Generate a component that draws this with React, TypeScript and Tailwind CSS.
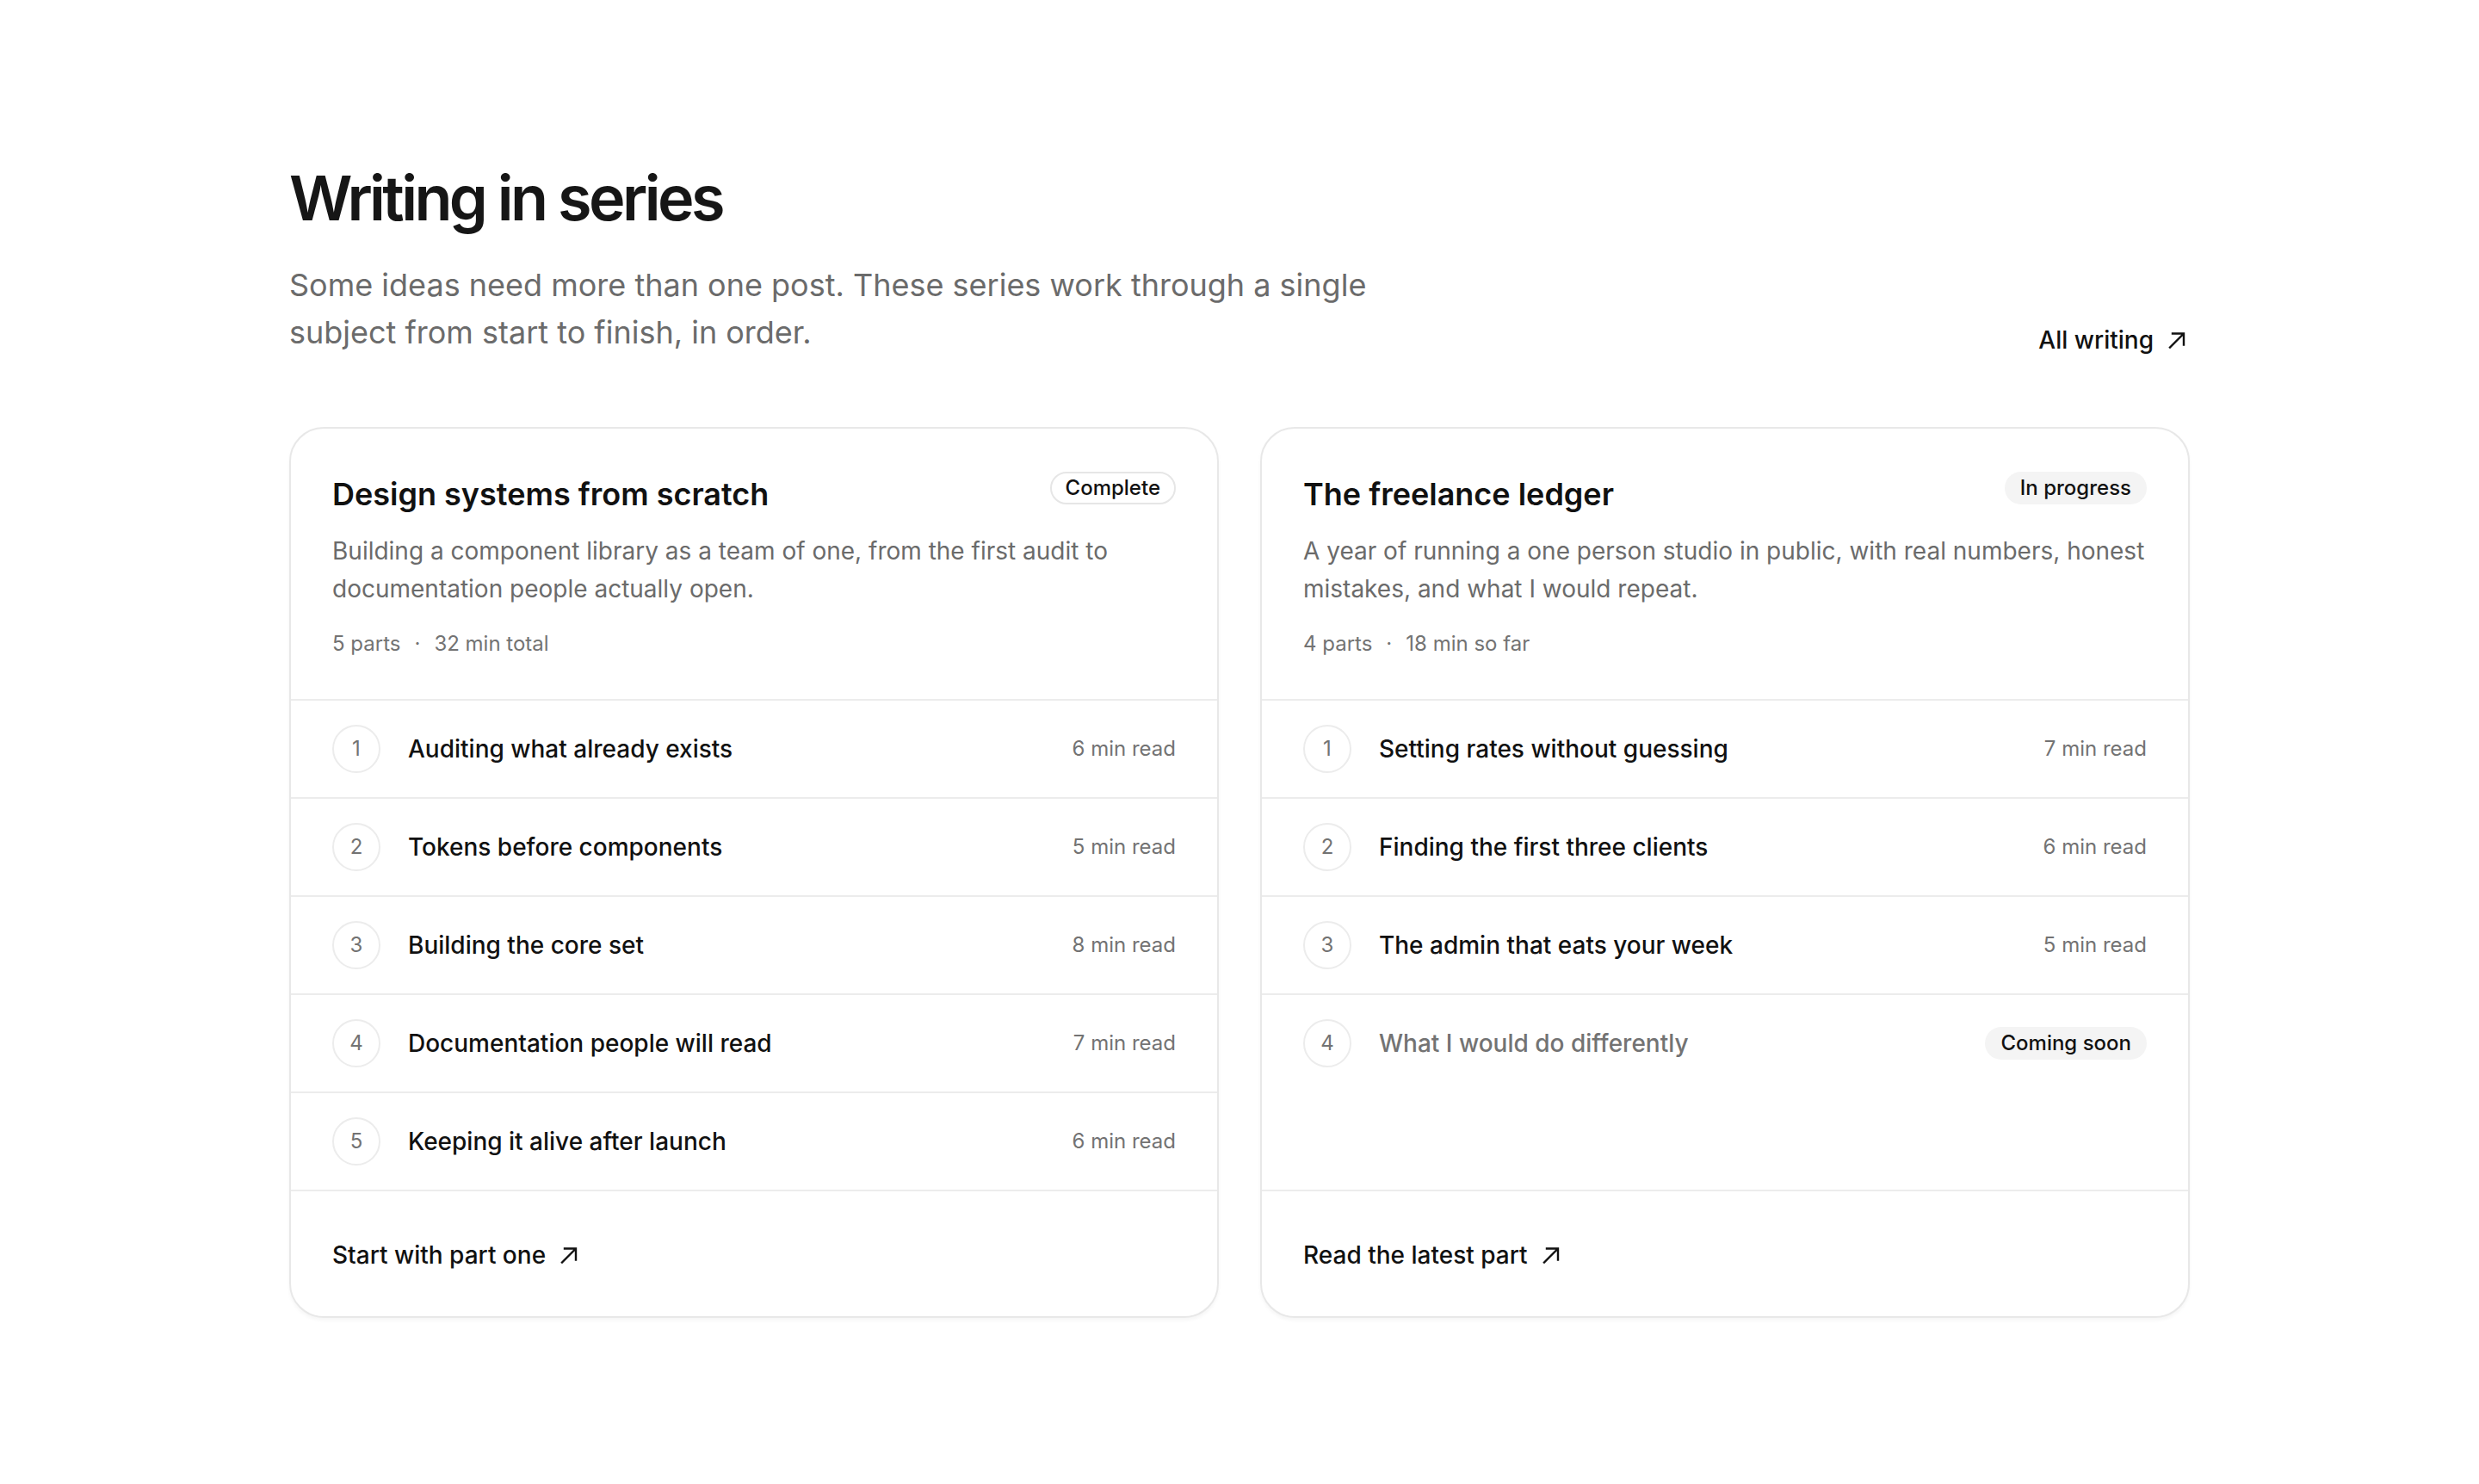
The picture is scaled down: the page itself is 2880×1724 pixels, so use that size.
type Part = { title: string; time?: string; soon?: boolean };

type Series = {
  title: string;
  status: 'complete' | 'progress';
  blurb: string;
  parts: string;
  total: string;
  cta: string;
  items: Part[];
};

const series: Series[] = [
  {
    title: 'Design systems from scratch',
    status: 'complete',
    blurb: 'Building a component library as a team of one, from the first audit to documentation people actually open.',
    parts: '5 parts',
    total: '32 min total',
    cta: 'Start with part one',
    items: [
      { title: 'Auditing what already exists', time: '6 min read' },
      { title: 'Tokens before components', time: '5 min read' },
      { title: 'Building the core set', time: '8 min read' },
      { title: 'Documentation people will read', time: '7 min read' },
      { title: 'Keeping it alive after launch', time: '6 min read' },
    ],
  },
  {
    title: 'The freelance ledger',
    status: 'progress',
    blurb: 'A year of running a one person studio in public, with real numbers, honest mistakes, and what I would repeat.',
    parts: '4 parts',
    total: '18 min so far',
    cta: 'Read the latest part',
    items: [
      { title: 'Setting rates without guessing', time: '7 min read' },
      { title: 'Finding the first three clients', time: '6 min read' },
      { title: 'The admin that eats your week', time: '5 min read' },
      { title: 'What I would do differently', soon: true },
    ],
  },
];

// small diagonal arrow used next to links
function Arrow() {
  return (
    <svg width="30" height="30" viewBox="0 0 30 30" fill="none" className="shrink-0">
      <path d="M7 23.5L22.5 8M10 7.5H23V20.5" stroke="#111" strokeWidth="2.4" strokeLinecap="square" />
    </svg>
  );
}

function SeriesCard({ s }: { s: Series }) {
  return (
    <div className="flex flex-col rounded-[40px] border-2 border-[#e8e8e8] bg-white shadow-[0_3px_4px_rgba(0,0,0,0.04)]">
      {/* Header */}
      <div className="px-12 pt-12 pb-[46px]">
        <div className="flex items-start justify-between gap-6">
          <h2 className="text-[36px] leading-[56px] font-semibold text-[#111]">{s.title}</h2>
          {s.status === 'complete' ? (
            <span className="mt-[2px] rounded-full border-2 border-[#e6e6e6] px-[16px] py-[1px] text-[24px] leading-8 font-medium text-[#111]">
              Complete
            </span>
          ) : (
            <span className="mt-[2px] rounded-full bg-[#f4f4f4] px-[18px] py-[3px] text-[24px] leading-8 font-medium text-[#111]">
              In progress
            </span>
          )}
        </div>
        <p className="mt-4 -mr-2 text-[28px] leading-[44px] text-[#6b6b6b]">{s.blurb}</p>
        <div className="mt-6 flex items-center gap-4 text-[24px] leading-9 text-[#737373]">
          <span>{s.parts}</span>
          <span>·</span>
          <span>{s.total}</span>
        </div>
      </div>

      {/* Parts */}
      <div className="flex-1">
        {s.items.map((p, i) => (
          <div key={p.title} className="flex items-center gap-8 border-t-2 border-[#ececec] px-12 py-[28px]">
            <span className="flex h-14 w-14 shrink-0 items-center justify-center rounded-full border-2 border-[#ececec] text-[24px] text-[#737373]">
              {i + 1}
            </span>
            <span className={`flex-1 text-[28px] font-medium ${p.soon ? 'text-[#737373]' : 'text-[#111]'}`}>
              {p.title}
            </span>
            {p.soon ? (
              <span className="rounded-full bg-[#f4f4f4] px-[18px] py-[3px] text-[24px] leading-8 font-medium text-[#111]">
                Coming soon
              </span>
            ) : (
              <span className="text-[24px] text-[#737373]">{p.time}</span>
            )}
          </div>
        ))}
      </div>

      {/* Footer */}
      <div className="border-t-2 border-[#ececec] px-12 pt-[50px] pb-[47px]">
        <a href="#" className="inline-flex items-center gap-3 text-[28px] leading-[48px] font-medium text-[#111]">
          {s.cta}
          <Arrow />
        </a>
      </div>
    </div>
  );
}

export default function App() {
  return (
    <div className="min-h-screen bg-white font-['Inter',sans-serif] antialiased">
      <div className="mx-auto max-w-[2208px] pt-[190px] pb-48">
        <div className="flex items-end justify-between gap-16">
          <div>
            <h1 className="text-[72px] leading-[80px] font-semibold tracking-[-0.05em] text-[#161616]">Writing in series</h1>
            <p className="mt-[34px] max-w-[1344px] text-[36px] leading-[55px] text-[#6b6b6b]">
              Some ideas need more than one post. These series work through a single subject from start to finish, in order.
            </p>
          </div>
          <a href="#" className="inline-flex items-center gap-3 text-[28px] leading-[38px] font-medium text-[#111]">
            All writing
            <Arrow />
          </a>
        </div>

        <div className="mt-[82px] grid grid-cols-2 gap-12">
          {series.map((s) => (
            <SeriesCard key={s.title} s={s} />
          ))}
        </div>
      </div>
    </div>
  );
}
